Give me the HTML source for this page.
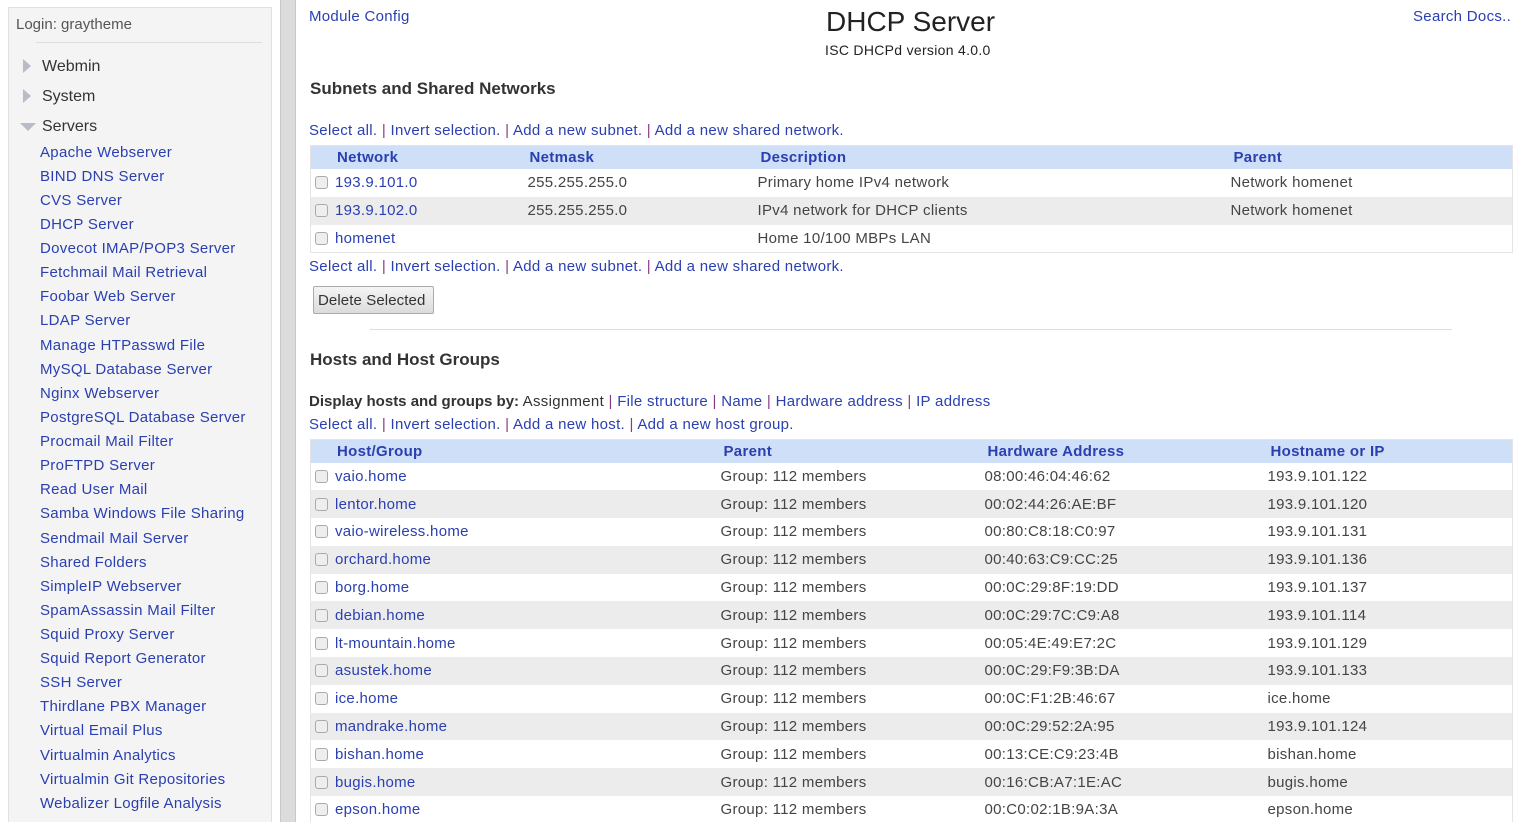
<!DOCTYPE html>
<html style="overflow:hidden;width:1522px;height:822px"><head><meta charset="utf-8"><style>
*{margin:0;padding:0;box-sizing:border-box}
body{width:1522px;height:822px;overflow:hidden;background:#fff;font-family:"Liberation Sans",sans-serif;font-size:15px;color:#333;position:relative;letter-spacing:0.3px}
a,.l{color:#2a3fb0;text-decoration:none}
#side{position:absolute;left:8px;top:7px;width:264px;height:815px;background:#f4f4f4;border:1px solid #e0e0e0;border-bottom:0}
#side .login{position:absolute;left:7px;top:8px;color:#555;font-size:15px;letter-spacing:0}
#side hr{position:absolute;left:27px;top:34px;width:226px;border:0;border-top:1px solid #ddd}
.cat{position:absolute;left:33px;color:#333;font-size:16px;letter-spacing:0}
.tri{position:absolute;left:14px;width:0;height:0}
.it{position:absolute;left:31px;font-size:15px;color:#2a3fb0;white-space:nowrap}
#div{position:absolute;left:280px;top:0;width:16px;height:822px;background:#dcdcdc;border-left:1px solid #c8c8c8;border-right:1px solid #c8c8c8}
.abs{position:absolute;white-space:nowrap}
.sep{color:#8a3a8a}
table{position:absolute;left:310px;width:1203px;border-collapse:collapse;border:1px solid #e4e4e4}
th{background:#cfdff7;color:#2a3fb0;font-weight:bold;text-align:left;height:23px;font-size:15px;padding:0}
td{padding:0;font-size:15px;color:#444;white-space:nowrap}
tr.z td{background:#ececec}
.cb{display:inline-block;width:13px;height:13px;border:1px solid #aaa;border-radius:3px;background:#eee;vertical-align:-2px;margin:0 7px 0 4px}
h2{position:absolute;font-size:17px;font-weight:bold;color:#333;letter-spacing:0}
</style></head><body>
<div id="side">
<div class="login">Login: graytheme</div><hr>
<div class="tri" style="top:51px;border-left:8px solid #b8bcc8;border-top:7px solid transparent;border-bottom:7px solid transparent"></div>
<div class="cat" style="top:50px">Webmin</div>
<div class="tri" style="top:81px;border-left:8px solid #b8bcc8;border-top:7px solid transparent;border-bottom:7px solid transparent"></div>
<div class="cat" style="top:80px">System</div>
<div class="tri" style="top:115px;left:11px;border-top:8px solid #b8bcc8;border-left:8px solid transparent;border-right:8px solid transparent"></div>
<div class="cat" style="top:110px">Servers</div>
<div class="it" style="top:136px">Apache Webserver</div>
<div class="it" style="top:160px">BIND DNS Server</div>
<div class="it" style="top:184px">CVS Server</div>
<div class="it" style="top:208px">DHCP Server</div>
<div class="it" style="top:232px">Dovecot IMAP/POP3 Server</div>
<div class="it" style="top:256px">Fetchmail Mail Retrieval</div>
<div class="it" style="top:280px">Foobar Web Server</div>
<div class="it" style="top:304px">LDAP Server</div>
<div class="it" style="top:329px">Manage HTPasswd File</div>
<div class="it" style="top:353px">MySQL Database Server</div>
<div class="it" style="top:377px">Nginx Webserver</div>
<div class="it" style="top:401px">PostgreSQL Database Server</div>
<div class="it" style="top:425px">Procmail Mail Filter</div>
<div class="it" style="top:449px">ProFTPD Server</div>
<div class="it" style="top:473px">Read User Mail</div>
<div class="it" style="top:497px">Samba Windows File Sharing</div>
<div class="it" style="top:522px">Sendmail Mail Server</div>
<div class="it" style="top:546px">Shared Folders</div>
<div class="it" style="top:570px">SimpleIP Webserver</div>
<div class="it" style="top:594px">SpamAssassin Mail Filter</div>
<div class="it" style="top:618px">Squid Proxy Server</div>
<div class="it" style="top:642px">Squid Report Generator</div>
<div class="it" style="top:666px">SSH Server</div>
<div class="it" style="top:690px">Thirdlane PBX Manager</div>
<div class="it" style="top:714px">Virtual Email Plus</div>
<div class="it" style="top:739px">Virtualmin Analytics</div>
<div class="it" style="top:763px">Virtualmin Git Repositories</div>
<div class="it" style="top:787px">Webalizer Logfile Analysis</div>
</div>
<div id="div"></div>

<div class="abs l" style="left:309px;top:8px">Module Config</div>
<div class="abs" style="left:826px;top:6px;font-size:28px;color:#222;letter-spacing:0">DHCP Server</div>
<div class="abs" style="left:825px;top:42px;font-size:14px;color:#222">ISC DHCPd version 4.0.0</div>
<div class="abs l" style="left:1413px;top:8px">Search Docs..</div>

<h2 style="left:310px;top:79px">Subnets and Shared Networks</h2>
<div class="abs l" style="left:309px;top:122px">Select all. <span class="sep">|</span> Invert selection. <span class="sep">|</span> Add a new subnet. <span class="sep">|</span> Add a new shared network.</div>
<table style="top:145px">
<colgroup><col style="width:217px"><col style="width:230px"><col style="width:473px"><col></colgroup>
<tr><th style="padding-left:26px">Network</th><th style="padding-left:2px">Netmask</th><th style="padding-left:3px">Description</th><th style="padding-left:3px">Parent</th></tr>
<tr style="height:28px"><td><span class="cb"></span><span class="l">193.9.101.0</span></td><td>255.255.255.0</td><td>Primary home IPv4 network</td><td>Network homenet</td></tr>
<tr class="z" style="height:28px"><td><span class="cb"></span><span class="l">193.9.102.0</span></td><td>255.255.255.0</td><td>IPv4 network for DHCP clients</td><td>Network homenet</td></tr>
<tr style="height:28px"><td><span class="cb"></span><span class="l">homenet</span></td><td></td><td>Home 10/100 MBPs LAN</td><td></td></tr>
</table>
<div class="abs l" style="left:309px;top:258px">Select all. <span class="sep">|</span> Invert selection. <span class="sep">|</span> Add a new subnet. <span class="sep">|</span> Add a new shared network.</div>
<div class="abs" style="left:313px;top:286px;width:121px;height:28px;border:1px solid #aaa;border-radius:2px;background:linear-gradient(#f4f4f4,#dcdcdc);font-size:15px;color:#333;padding:5px 0 0 4px;letter-spacing:0.1px">Delete Selected</div>
<div class="abs" style="left:370px;top:329px;width:1082px;border-top:1px solid #ddd"></div>

<h2 style="left:310px;top:350px">Hosts and Host Groups</h2>
<div class="abs" style="left:309px;top:393px"><b style="letter-spacing:0">Display hosts and groups by:</b> Assignment <span class="sep">|</span> <span class="l">File structure</span> <span class="sep">|</span> <span class="l">Name</span> <span class="sep">|</span> <span class="l">Hardware address</span> <span class="sep">|</span> <span class="l">IP address</span></div>
<div class="abs l" style="left:309px;top:416px">Select all. <span class="sep">|</span> Invert selection. <span class="sep">|</span> Add a new host. <span class="sep">|</span> Add a new host group.</div>
<table style="top:439px">
<colgroup><col style="width:410px"><col style="width:264px"><col style="width:283px"><col></colgroup>
<tr><th style="padding-left:26px">Host/Group</th><th style="padding-left:3px">Parent</th><th style="padding-left:3px">Hardware Address</th><th style="padding-left:3px">Hostname or IP</th></tr>
<tr style="height:27.8px"><td><span class="cb"></span><span class="l">vaio.home</span></td><td>Group: 112 members</td><td>08:00:46:04:46:62</td><td>193.9.101.122</td></tr>
<tr class="z" style="height:27.8px"><td><span class="cb"></span><span class="l">lentor.home</span></td><td>Group: 112 members</td><td>00:02:44:26:AE:BF</td><td>193.9.101.120</td></tr>
<tr style="height:27.8px"><td><span class="cb"></span><span class="l">vaio-wireless.home</span></td><td>Group: 112 members</td><td>00:80:C8:18:C0:97</td><td>193.9.101.131</td></tr>
<tr class="z" style="height:27.8px"><td><span class="cb"></span><span class="l">orchard.home</span></td><td>Group: 112 members</td><td>00:40:63:C9:CC:25</td><td>193.9.101.136</td></tr>
<tr style="height:27.8px"><td><span class="cb"></span><span class="l">borg.home</span></td><td>Group: 112 members</td><td>00:0C:29:8F:19:DD</td><td>193.9.101.137</td></tr>
<tr class="z" style="height:27.8px"><td><span class="cb"></span><span class="l">debian.home</span></td><td>Group: 112 members</td><td>00:0C:29:7C:C9:A8</td><td>193.9.101.114</td></tr>
<tr style="height:27.8px"><td><span class="cb"></span><span class="l">lt-mountain.home</span></td><td>Group: 112 members</td><td>00:05:4E:49:E7:2C</td><td>193.9.101.129</td></tr>
<tr class="z" style="height:27.8px"><td><span class="cb"></span><span class="l">asustek.home</span></td><td>Group: 112 members</td><td>00:0C:29:F9:3B:DA</td><td>193.9.101.133</td></tr>
<tr style="height:27.8px"><td><span class="cb"></span><span class="l">ice.home</span></td><td>Group: 112 members</td><td>00:0C:F1:2B:46:67</td><td>ice.home</td></tr>
<tr class="z" style="height:27.8px"><td><span class="cb"></span><span class="l">mandrake.home</span></td><td>Group: 112 members</td><td>00:0C:29:52:2A:95</td><td>193.9.101.124</td></tr>
<tr style="height:27.8px"><td><span class="cb"></span><span class="l">bishan.home</span></td><td>Group: 112 members</td><td>00:13:CE:C9:23:4B</td><td>bishan.home</td></tr>
<tr class="z" style="height:27.8px"><td><span class="cb"></span><span class="l">bugis.home</span></td><td>Group: 112 members</td><td>00:16:CB:A7:1E:AC</td><td>bugis.home</td></tr>
<tr style="height:27.8px"><td><span class="cb"></span><span class="l">epson.home</span></td><td>Group: 112 members</td><td>00:C0:02:1B:9A:3A</td><td>epson.home</td></tr>
</table>
</body></html>
